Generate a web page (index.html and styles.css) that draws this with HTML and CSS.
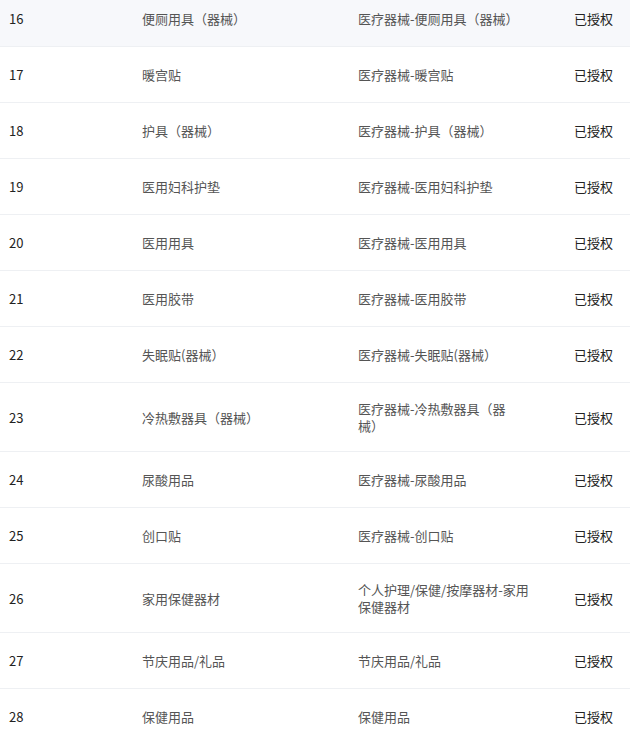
FILE: index.html
```html
<!DOCTYPE html>
<html lang="zh-CN">
<head>
<meta charset="utf-8">
<title>授权类目</title>
<link rel="stylesheet" href="styles.css">
</head>
<body>
<div class="table">
  <div class="row row-hl"><div class="c-no">16</div><div class="c-name">便厕用具（器械）</div><div class="c-cat">医疗器械-便厕用具（器械）</div><div class="c-st">已授权</div></div>
  <div class="row"><div class="c-no">17</div><div class="c-name">暖宫贴</div><div class="c-cat">医疗器械-暖宫贴</div><div class="c-st">已授权</div></div>
  <div class="row"><div class="c-no">18</div><div class="c-name">护具（器械）</div><div class="c-cat">医疗器械-护具（器械）</div><div class="c-st">已授权</div></div>
  <div class="row"><div class="c-no">19</div><div class="c-name">医用妇科护垫</div><div class="c-cat">医疗器械-医用妇科护垫</div><div class="c-st">已授权</div></div>
  <div class="row"><div class="c-no">20</div><div class="c-name">医用用具</div><div class="c-cat">医疗器械-医用用具</div><div class="c-st">已授权</div></div>
  <div class="row"><div class="c-no">21</div><div class="c-name">医用胶带</div><div class="c-cat">医疗器械-医用胶带</div><div class="c-st">已授权</div></div>
  <div class="row"><div class="c-no">22</div><div class="c-name">失眠贴(器械）</div><div class="c-cat">医疗器械-失眠贴(器械）</div><div class="c-st">已授权</div></div>
  <div class="row"><div class="c-no">23</div><div class="c-name">冷热敷器具（器械）</div><div class="c-cat">医疗器械-冷热敷器具（器<br>械）</div><div class="c-st">已授权</div></div>
  <div class="row"><div class="c-no">24</div><div class="c-name">尿酸用品</div><div class="c-cat">医疗器械-尿酸用品</div><div class="c-st">已授权</div></div>
  <div class="row"><div class="c-no">25</div><div class="c-name">创口贴</div><div class="c-cat">医疗器械-创口贴</div><div class="c-st">已授权</div></div>
  <div class="row"><div class="c-no">26</div><div class="c-name">家用保健器材</div><div class="c-cat">个人护理/保健/按摩器材-家用保健器材</div><div class="c-st">已授权</div></div>
  <div class="row"><div class="c-no">27</div><div class="c-name">节庆用品/礼品</div><div class="c-cat">节庆用品/礼品</div><div class="c-st">已授权</div></div>
  <div class="row"><div class="c-no">28</div><div class="c-name">保健用品</div><div class="c-cat">保健用品</div><div class="c-st">已授权</div></div>
</div>
</body>
</html>
```
FILE: styles.css
```css
html, body {
  margin: 0;
  padding: 0;
  background: #ffffff;
  overflow: hidden;
}
body {
  font-family: "Noto Sans CJK SC", "Noto Sans", sans-serif;
  font-size: 13px;
  line-height: 17px;
  color: #333333;
}
.table {
  width: 630px;
  margin-top: -9px;
}
.row {
  display: grid;
  grid-template-columns: 142px 216px 216px 1fr;
  align-items: center;
  box-sizing: border-box;
  min-height: 56px;
  padding: 17px 0;
  border-bottom: 1px solid #eef0f3;
}
.row-hl {
  background: #f7f8fb;
}
.c-no {
  padding-left: 9px;
  color: #222222;
}
.c-name {
  color: #555555;
}
.c-cat {
  color: #555555;
  padding-right: 36px;
}
.c-st {
  color: #222222;
}
```
